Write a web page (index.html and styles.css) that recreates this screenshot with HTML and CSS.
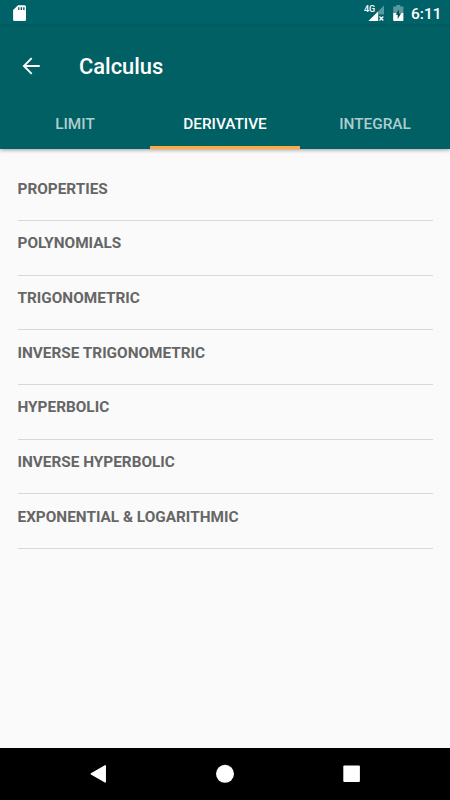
FILE: index.html
```html
<!DOCTYPE html>
<html lang="en">
<head>
<meta charset="utf-8">
<title>Calculus</title>
<link rel="stylesheet" href="styles.css">
</head>
<body>
<div class="screen">
  <header class="header">
    <div class="status">
      <svg class="sd" width="14" height="17" viewBox="0 0 14 17"><path fill="#fff" d="M5 .2H11.5Q13 .2 13 1.7V14.700Q13 16 11.500 16H1.500Q.1 16 .1 14.500V5Z"/><path fill="#00474b" d="M5.200 2.200h1.200v2.800H5.200zM7.700 2.200h1.300v2.800H7.700zM10.200 2.200h1.300v2.800h-1.300z"/></svg>
      <div class="status-right">
        <span class="network">4G</span>
        <svg class="signal" width="17" height="16" viewBox="0 0 17 16"><path fill="#fff" fill-opacity=".35" d="M16 .5V9.500H10.500V6Z"/><path fill="#fff" d="M10.200 6.200V16H.4Z"/><path stroke="#fff" stroke-width="1.300" d="m11.500 11.500 3.800 4m0-4-3.800 4"/></svg>
        <svg class="battery" width="11" height="17" viewBox="0 0 11 17"><path fill="#fff" fill-opacity=".35" d="M3.300 0h4v1.600H10.400V8H.2V1.600H3.300Z"/><path fill="#fff" d="M.2 8h10.200v7.300q0 .7-.7.7H.9q-.7 0-.7-.7Z"/><path fill="#004d51" d="M6 4.200 2.700 9.700h2v4.200l3.500-5.600H6Z"/></svg>
        <span class="clock">6:11</span>
      </div>
    </div>
    <div class="toolbar">
      <svg class="back" width="20" height="20" viewBox="0 0 20 20"><path fill="none" stroke="#fff" stroke-width="1.900" d="M18.700 10H3.300M10.700 2.200 2.900 10l7.800 7.800"/></svg>
      <h1 class="title">Calculus</h1>
    </div>
    <nav class="tabs">
      <div class="tab"><span>LIMIT</span></div>
      <div class="tab active"><span>DERIVATIVE</span></div>
      <div class="tab"><span>INTEGRAL</span></div>
    </nav>
  </header>
  <main class="list">
    <div class="row"><span>PROPERTIES</span></div>
    <div class="row"><span>POLYNOMIALS</span></div>
    <div class="row"><span>TRIGONOMETRIC</span></div>
    <div class="row"><span>INVERSE TRIGONOMETRIC</span></div>
    <div class="row"><span>HYPERBOLIC</span></div>
    <div class="row"><span>INVERSE HYPERBOLIC</span></div>
    <div class="row"><span>EXPONENTIAL &amp; LOGARITHMIC</span></div>
  </main>
  <footer class="navbar">
    <svg width="18" height="20" viewBox="0 0 18 20"><path fill="#fff" stroke="#fff" stroke-width="1.500" stroke-linejoin="round" d="M16.200 1.900V17.900L2.300 9.900Z"/></svg>
    <svg width="18" height="20" viewBox="0 0 18 20"><circle cx="9" cy="9.800" r="9" fill="#fff"/></svg>
    <svg width="18" height="20" viewBox="0 0 18 20"><rect x=".3" y="1.500" width="16.600" height="16.600" rx="1" fill="#fff"/></svg>
  </footer>
</div>
</body>
</html>
```
FILE: styles.css
```css
* { box-sizing: border-box; }
body { margin: 0; font-family: Roboto, "Liberation Sans", sans-serif; }
.screen {
  width: 450px;
  height: 800px;
  display: flex;
  flex-direction: column;
  overflow: hidden;
  background: #fafafa;
}
.header {
  height: 148.700px;
  flex: none;
  display: flex;
  flex-direction: column;
  background: #006064;
  color: #fff;
  box-shadow: 0 1px 4px rgba(0, 0, 0, .38);
}
.status {
  height: 26px;
  flex: none;
  display: flex;
  justify-content: space-between;
  padding: 5px 9px 0 13px;
  background: linear-gradient(#006269 0, #006269 24px, #005659 25px, #005c60 26px);
}
.status svg { display: block; flex: none; }
.status-right { display: flex; }
.network { font-size: 9px; line-height: 10px; font-weight: 500; width: 4px; margin-top: -1px; white-space: nowrap; }
.battery { margin-left: 8px; }
.clock {
  width: 30px;
  margin-left: 7px;
  font-size: 15.500px;
  line-height: 18px;
  font-weight: 500;
  white-space: nowrap;
}
.toolbar { height: 79px; flex: none; display: flex; align-items: center; padding-left: 21px; }
.title { margin: 2px 0 0 38px; font-size: 21.900px; line-height: 26px; font-weight: 500; }
.tabs { flex: 1; display: grid; grid-template-columns: repeat(3, 1fr); }
.tab {
  display: flex;
  justify-content: center;
  padding-top: 10px;
  font-size: 15.350px;
  line-height: 18px;
  font-weight: 500;
  color: rgba(255, 255, 255, .7);
}
.tab.active { color: #fff; border-bottom: 3px solid #ffab40; }
.list { flex: 1; padding: 17.600px 17.500px 0; }
.row {
  height: 54.690px;
  padding-top: 13.300px;
  border-bottom: 1px solid #d8d8d8;
  font-size: 15.350px;
  line-height: 18px;
  font-weight: 700;
  color: #666;
}
.navbar {
  height: 52.500px;
  flex: none;
  display: flex;
  justify-content: center;
  gap: 109px;
  padding-top: 16.500px;
  background: #000;
}
```
